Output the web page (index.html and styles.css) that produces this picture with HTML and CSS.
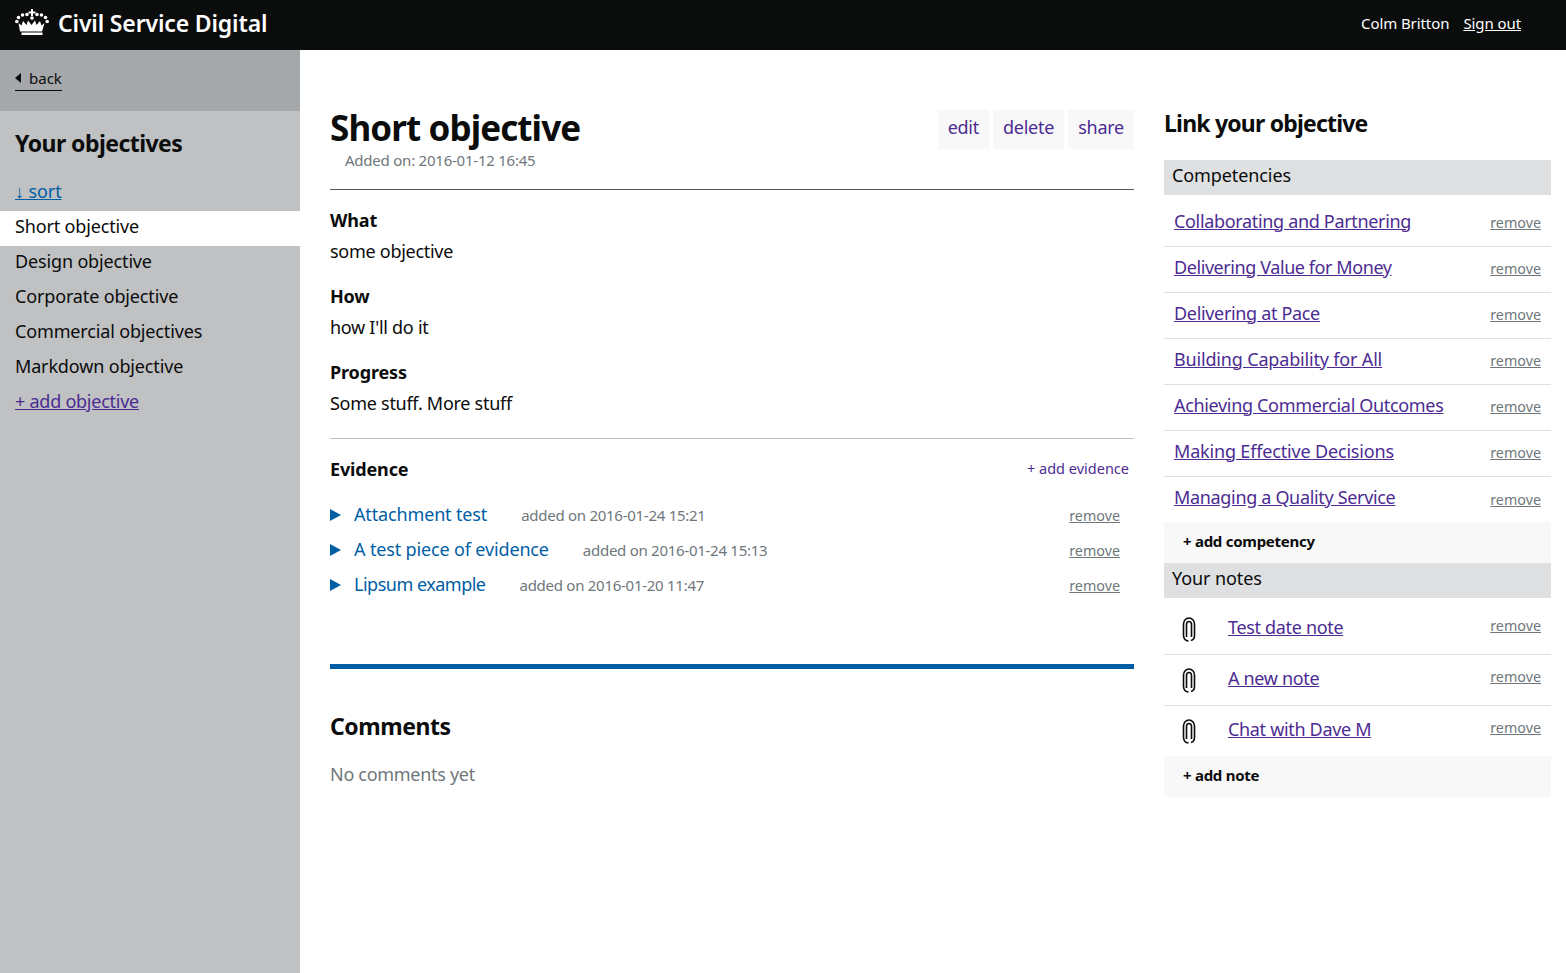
FILE: index.html
```html
<!DOCTYPE html>
<html lang="en">
<head>
<meta charset="utf-8">
<title>Short objective</title>
<link rel="stylesheet" href="styles.css">
</head>
<body>
<header class="topbar">
  <a class="brand" href="#">
    <svg class="crown" viewBox="0 0 34 26" width="34" height="26" fill="#fff">
      <path d="M16 0h2v2.500h2.500v2H18V7h-2V4.500h-2.500v-2H16z"/>
      <circle cx="17" cy="9" r="1.800"/>
      <circle cx="12" cy="5.500" r="1.800"/><circle cx="22" cy="5.500" r="1.800"/>
      <circle cx="7.500" cy="6" r="1.800"/><circle cx="26.500" cy="6" r="1.800"/>
      <circle cx="3.500" cy="8.500" r="1.800"/><circle cx="30.500" cy="8.500" r="1.800"/>
      <circle cx="1.800" cy="12.500" r="1.800"/><circle cx="32.200" cy="12.500" r="1.800"/>
      <path d="M3.500 14l3 2.500 1.500-4.500 3.500 4 1.500-4.500 3.500 4.500 3.500-4.500 1.500 4.500 3.500-4 1.500 4.500 3-2.500-2.500 8.500h-22z"/>
      <path d="M6.500 23.500h21V26h-21z"/>
    </svg>
    <span class="brand-name">Civil Service Digital</span>
  </a>
  <div class="account">
    <span>Colm Britton</span>
    <a href="#" class="signout">Sign out</a>
  </div>
</header>
<div class="layout">
  <aside class="sidebar">
    <div class="backbar"><a href="#" class="back"><span class="back-arrow"></span>back</a></div>
    <h2 class="side-title">Your objectives</h2>
    <a href="#" class="sort">↓ sort</a>
    <ul class="side-list">
      <li class="side-item side-item-active">Short objective</li>
      <li class="side-item">Design objective</li>
      <li class="side-item">Corporate objective</li>
      <li class="side-item">Commercial objectives</li>
      <li class="side-item">Markdown objective</li>
      <li class="side-item"><a href="#" class="side-add">+ add objective</a></li>
    </ul>
  </aside>
  <main class="main">
    <div class="head">
      <div>
        <h1 class="title">Short objective</h1>
        <p class="added">Added on: 2016-01-12 16:45</p>
      </div>
      <div class="actions">
        <a href="#" class="action">edit</a>
        <a href="#" class="action">delete</a>
        <a href="#" class="action">share</a>
      </div>
    </div>
    <section class="details">
      <h3 class="label">What</h3>
      <p class="value">some objective</p>
      <h3 class="label">How</h3>
      <p class="value">how I'll do it</p>
      <h3 class="label">Progress</h3>
      <p class="value">Some stuff. More stuff</p>
    </section>
    <section class="evidence">
      <div class="ev-head">
        <h3 class="label">Evidence</h3>
        <a href="#" class="ev-add">+ add evidence</a>
      </div>
      <div class="ev-row"><span class="tri"></span><a href="#" class="ev-link">Attachment test</a><span class="ev-date">added on 2016-01-24 15:21</span><a href="#" class="remove ev-remove">remove</a></div>
      <div class="ev-row"><span class="tri"></span><a href="#" class="ev-link">A test piece of evidence</a><span class="ev-date">added on 2016-01-24 15:13</span><a href="#" class="remove ev-remove">remove</a></div>
      <div class="ev-row"><span class="tri"></span><a href="#" class="ev-link ev-link-tight">Lipsum example</a><span class="ev-date">added on 2016-01-20 11:47</span><a href="#" class="remove ev-remove">remove</a></div>
    </section>
    <section class="comments">
      <h2 class="comments-title">Comments</h2>
      <p class="no-comments">No comments yet</p>
    </section>
  </main>
  <aside class="links">
    <h2 class="links-title">Link your objective</h2>
    <div class="band">Competencies</div>
    <ul class="comp-list">
      <li class="comp"><a href="#" class="comp-link">Collaborating and Partnering</a><a href="#" class="remove comp-remove">remove</a></li>
      <li class="comp"><a href="#" class="comp-link comp-link-tight">Delivering Value for Money</a><a href="#" class="remove comp-remove">remove</a></li>
      <li class="comp"><a href="#" class="comp-link">Delivering at Pace</a><a href="#" class="remove comp-remove">remove</a></li>
      <li class="comp"><a href="#" class="comp-link comp-link-loose">Building Capability for All</a><a href="#" class="remove comp-remove">remove</a></li>
      <li class="comp"><a href="#" class="comp-link">Achieving Commercial Outcomes</a><a href="#" class="remove comp-remove">remove</a></li>
      <li class="comp"><a href="#" class="comp-link comp-link-loose">Making Effective Decisions</a><a href="#" class="remove comp-remove">remove</a></li>
      <li class="comp comp-last"><a href="#" class="comp-link">Managing a Quality Service</a><a href="#" class="remove comp-remove">remove</a></li>
    </ul>
    <a href="#" class="add-bar">+ add competency</a>
    <div class="band">Your notes</div>
    <ul class="note-list">
      <li class="note"><svg class="clip" viewBox="0 0 14 25" width="14" height="25" fill="none" stroke="#0b0c0c" stroke-width="1.600"><path d="M9 23.500c2 -.5 3.500-2.500 3.500-5V7a5.500 6 0 0 0-11 0v11.500a5.500 6 0 0 0 5 5.500M9.500 20V7.500a2.500 3 0 0 0-5 0V20"/></svg><a href="#" class="comp-link note-link">Test date note</a><a href="#" class="remove note-remove">remove</a></li>
      <li class="note"><svg class="clip" viewBox="0 0 14 25" width="14" height="25" fill="none" stroke="#0b0c0c" stroke-width="1.600"><path d="M9 23.500c2 -.5 3.500-2.500 3.500-5V7a5.500 6 0 0 0-11 0v11.500a5.500 6 0 0 0 5 5.500M9.500 20V7.500a2.500 3 0 0 0-5 0V20"/></svg><a href="#" class="comp-link note-link">A new note</a><a href="#" class="remove note-remove">remove</a></li>
      <li class="note note-last"><svg class="clip" viewBox="0 0 14 25" width="14" height="25" fill="none" stroke="#0b0c0c" stroke-width="1.600"><path d="M9 23.500c2 -.5 3.500-2.500 3.500-5V7a5.500 6 0 0 0-11 0v11.500a5.500 6 0 0 0 5 5.500M9.500 20V7.500a2.500 3 0 0 0-5 0V20"/></svg><a href="#" class="comp-link note-link">Chat with Dave M</a><a href="#" class="remove note-remove">remove</a></li>
    </ul>
    <a href="#" class="add-bar">+ add note</a>
  </aside>
</div>
</body>
</html>
```
FILE: styles.css
```css
* { box-sizing: border-box; }
html, body { margin: 0; padding: 0; height: 100%; }
body {
  font-family: "Noto Sans", "Open Sans", sans-serif;
  font-size: 18px;
  color: #0b0c0c;
  background: #fff;
  display: flex;
  flex-direction: column;
  min-height: 973px;
}
h1, h2, h3, p, ul { margin: 0; padding: 0; }
ul { list-style: none; }
a { color: inherit; }

.topbar {
  height: 50px;
  flex: none;
  background: #0b0c0c;
  color: #fff;
  display: flex;
  align-items: center;
  justify-content: space-between;
  padding: 0 45px 0 15px;
}
.brand { display: flex; align-items: center; gap: 9px; color: #fff; text-decoration: none; }
.crown { display: block; margin-bottom: 6px; }
.brand-name { font-size: 23px; font-weight: 600; line-height: 30px; letter-spacing: -0.15px; margin-bottom: 4px; }
.account { display: flex; gap: 14px; font-size: 15px; letter-spacing: -0.08px; margin-bottom: 4px; }
.signout { color: #fff; }

.layout { flex: 1; display: flex; align-items: stretch; }

.sidebar { width: 300px; flex: none; background: #bfc1c3; }
.backbar { height: 61px; background: #a5a8aa; padding: 14px 15px 0; }
.back {
  display: inline-flex;
  align-items: center;
  gap: 8px;
  height: 22px;
  padding-bottom: 2px;
  line-height: 18px;
  font-size: 15px;
  text-decoration: none;
  border-bottom: 1px solid #0b0c0c;
  color: #0b0c0c;
}
.back-arrow {
  width: 0; height: 0;
  border-style: solid;
  border-width: 5px 6px 5px 0;
  border-color: transparent #0b0c0c transparent transparent;
}
.side-title { font-size: 23px; font-weight: 700; line-height: 32px; padding: 16px 15px 0; letter-spacing: -0.55px; }
.sort { display: inline-block; margin: 20px 15px 0; font-size: 18px; line-height: 24px; color: #005ea5; letter-spacing: -0.1px; }
.side-list { margin-top: 8px; }
.side-item { height: 35px; line-height: 31px; padding: 0 15px; font-size: 18px; letter-spacing: -0.15px; }
.side-item-active { background: #fff; }
.side-add { color: #4c2c92; letter-spacing: -0.25px; }

.main { width: 804px; flex: none; margin-left: 30px; padding-top: 60px; }
.head {
  display: flex;
  justify-content: space-between;
  align-items: flex-start;
  height: 80px;
  border-bottom: 1px solid #58595b;
}
.title { font-size: 35px; font-weight: 700; line-height: 36px; letter-spacing: -0.9px; }
.added { font-size: 15px; line-height: 20px; color: #6f777b; margin: 4px 0 0 15px; letter-spacing: -0.23px; }
.actions { display: flex; gap: 4px; }
.action {
  height: 39px;
  padding: 0 10px;
  background: #f8f8f8;
  color: #4c2c92;
  font-size: 18px;
  line-height: 35px;
  text-decoration: none;
  letter-spacing: -0.25px;
}
.details { border-bottom: 1px solid #bfc1c3; padding: 18px 0 23px; }
.label { font-size: 18px; font-weight: 700; line-height: 24px; letter-spacing: -0.15px; }
.value { font-size: 18px; line-height: 24px; margin: 7px 0 21px; letter-spacing: -0.28px; }
.value:last-child { margin-bottom: 0; }

.evidence { height: 230px; border-bottom: 5px solid #005ea5; }
.ev-head { display: flex; justify-content: space-between; align-items: center; padding: 18px 5px 16px 0; }
.ev-add { font-size: 14.5px; color: #4c2c92; text-decoration: none; margin-top: -2px; }
.ev-row { display: flex; align-items: center; height: 35px; padding-right: 14px; }
.tri {
  width: 0; height: 0;
  border-style: solid;
  border-width: 6px 0 6px 11px;
  border-color: transparent transparent transparent #005ea5;
  margin-right: 13px;
}
.ev-link { font-size: 18px; line-height: 24px; color: #005ea5; text-decoration: none; margin: -2px 34px 0 0; letter-spacing: -0.15px; }
.ev-link-tight { letter-spacing: -0.5px; }
.ev-date { font-size: 15px; color: #6f777b; letter-spacing: -0.27px; }
.remove { font-size: 14.3px; color: #6f777b; }
.ev-remove { margin: 2px 0 0 auto; }

.comments-title { font-size: 23px; font-weight: 700; line-height: 32px; margin-top: 41px; letter-spacing: -0.45px; }
.no-comments { font-size: 18px; line-height: 24px; color: #6f777b; margin-top: 20px; letter-spacing: -0.3px; }

.links { width: 387px; flex: none; margin-left: 30px; padding-top: 58px; }
.links-title { font-size: 23px; font-weight: 700; line-height: 30px; margin-bottom: 22px; letter-spacing: -0.8px; }
.band { height: 35px; line-height: 30px; background: #dee0e2; padding: 0 8px; font-size: 18px; letter-spacing: -0.1px; }
.comp-list { padding-top: 6px; }
.comp {
  display: flex;
  justify-content: space-between;
  align-items: center;
  height: 46px;
  padding: 0 10px 6px;
  border-bottom: 1px solid #dee0e2;
}
.comp-last { border-bottom: 0; height: 45px; padding-bottom: 5px; }
.comp-link { font-size: 18px; color: #4c2c92; letter-spacing: -0.33px; }
.comp-link-tight { letter-spacing: -0.42px; }
.comp-link-loose { letter-spacing: -0.17px; }
.comp-remove { margin-top: 4px; }
.add-bar {
  display: block;
  height: 41px;
  line-height: 38px;
  background: #f8f8f8;
  padding: 0 19px;
  font-size: 15px;
  font-weight: 700;
  color: #0b0c0c;
  text-decoration: none;
  letter-spacing: -0.27px;
}
.note { display: flex; align-items: center; height: 51px; padding: 0 10px 0 18px; border-bottom: 1px solid #dee0e2; }
.note:first-child { height: 57px; padding-top: 6px; }
.note-last { border-bottom: 0; height: 50px; }
.clip { flex: none; margin-right: 32px; }
.note-link { margin-top: -4px; }
.note-remove { margin-left: auto; margin-top: -8px; }
```
